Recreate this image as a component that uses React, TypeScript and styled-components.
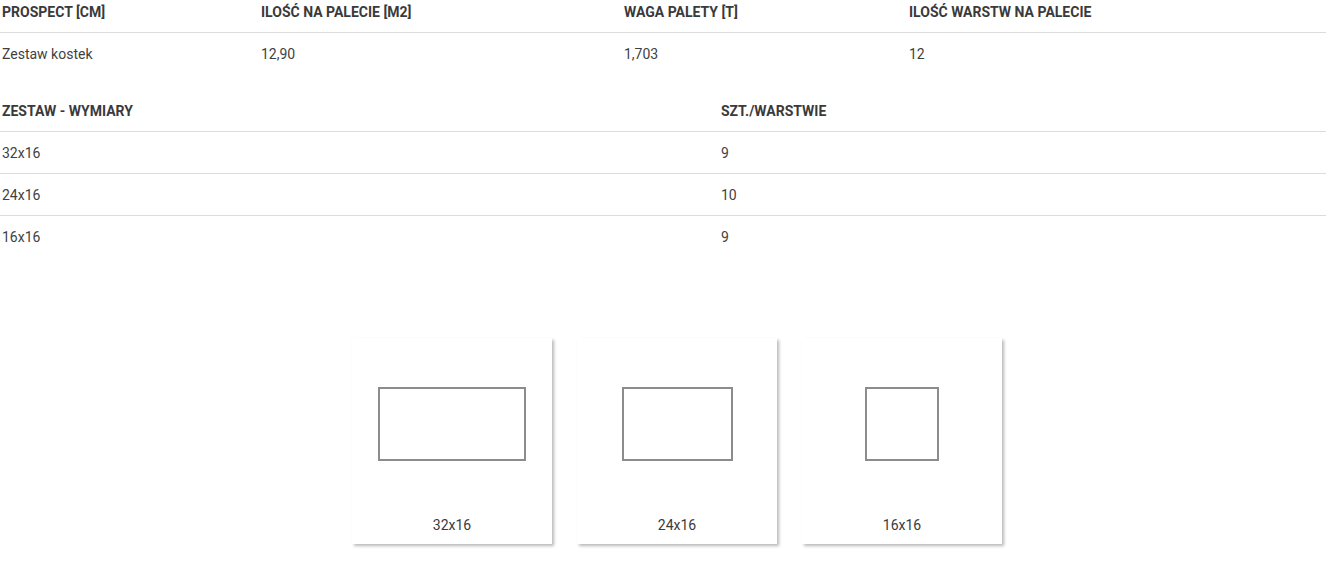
import React from 'react';
import styled, { createGlobalStyle } from 'styled-components';

const GlobalStyle = createGlobalStyle`
  html, body {
    margin: 0;
    padding: 0;
    background: #fff;
  }

  body {
    font-family: Roboto, 'Liberation Sans', sans-serif;
    color: #3a3a3a;
  }
`;

const summaryHeads = ['PROSPECT [CM]', 'ILOŚĆ NA PALECIE [M2]', 'WAGA PALETY [T]', 'ILOŚĆ WARSTW NA PALECIE'];
const summaryValues = ['Zestaw kostek', '12,90', '1,703', '12'];

const pieces = [
  { size: '32x16', count: '9', w: 32, h: 16 },
  { size: '24x16', count: '10', w: 24, h: 16 },
  { size: '16x16', count: '9', w: 16, h: 16 },
];

// px per cm for the layer drawings
const SCALE = 4.62;

const App = () => {
  return (
    <>
      <GlobalStyle />
      <Page>
        <Table columns="259px 363px 285px 1fr">
          {summaryHeads.map((head) => (
            <HeadCell key={head}>{head}</HeadCell>
          ))}
          {summaryValues.map((value, i) => (
            <Cell key={i} last>
              {value}
            </Cell>
          ))}
        </Table>

        <Table columns="719px 1fr" spaced>
          <HeadCell>ZESTAW - WYMIARY</HeadCell>
          <HeadCell>SZT./WARSTWIE</HeadCell>
          {pieces.map((piece, i) => (
            <React.Fragment key={piece.size}>
              <Cell last={i === pieces.length - 1}>{piece.size}</Cell>
              <Cell last={i === pieces.length - 1}>{piece.count}</Cell>
            </React.Fragment>
          ))}
        </Table>

        <Cards>
          {pieces.map((piece) => (
            <Card key={piece.size}>
              <Figure>
                <Brick style={{ width: Math.round(piece.w * SCALE), height: Math.round(piece.h * SCALE) }} />
              </Figure>
              <Caption>{piece.size}</Caption>
            </Card>
          ))}
        </Cards>
      </Page>
    </>
  );
};

export default App;

const Page = styled.div`
  width: 1326px;
  padding-bottom: 10px;
`;

const Table = styled.div<{ columns: string; spaced?: boolean }>`
  display: grid;
  grid-template-columns: ${(p) => p.columns};
  margin-top: ${(p) => (p.spaced ? '24px' : '0')};
`;

const HeadCell = styled.div`
  height: 33px;
  box-sizing: border-box;
  padding: 2px 2px 0;
  line-height: 20px;
  font-size: 14px;
  font-weight: 700;
  color: #3a3a3a;
  border-bottom: 1px solid #dcdcdc;
`;

const Cell = styled.div<{ last?: boolean }>`
  height: 42px;
  box-sizing: border-box;
  padding: 0 2px;
  display: flex;
  align-items: center;
  font-size: 14px;
  color: #3f3f3f;
  border-bottom: ${(p) => (p.last ? 'none' : '1px solid #dcdcdc')};
`;

const Cards = styled.div`
  display: flex;
  justify-content: center;
  gap: 25px;
  margin-top: 80px;
  padding-left: 28px;
`;

const Card = styled.div`
  width: 200px;
  height: 206px;
  box-sizing: border-box;
  display: flex;
  flex-direction: column;
  background: #fff;
  box-shadow: 2px 2px 3px rgba(0, 0, 0, 0.28);
`;

const Figure = styled.div`
  height: 172px;
  display: flex;
  align-items: center;
  justify-content: center;
`;

const Brick = styled.div`
  box-sizing: border-box;
  border: 2px solid #8c8c8c;
`;

const Caption = styled.div`
  margin-top: 5px;
  line-height: 20px;
  text-align: center;
  font-size: 14px;
  color: #3a3a3a;
`;
